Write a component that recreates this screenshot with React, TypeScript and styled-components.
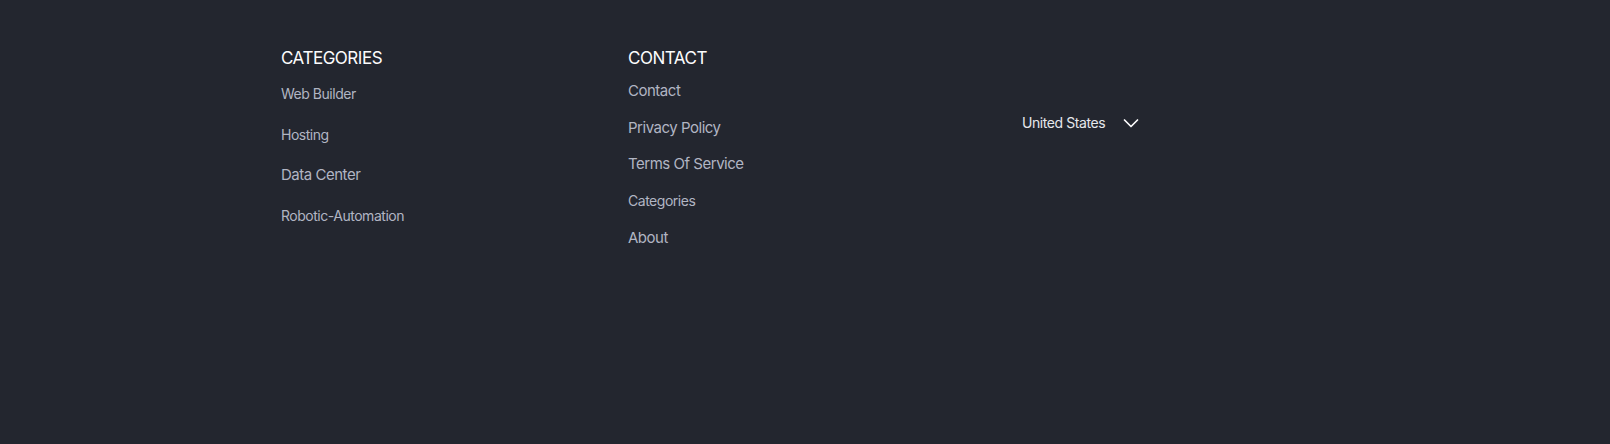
import React from "react";
import styled, { createGlobalStyle } from "styled-components";

const Global = createGlobalStyle`
  html, body { margin: 0; padding: 0; background: #23262f; }
  body { font-family: Inter, "Noto Sans", sans-serif; }
`;

const Footer = styled.footer`
  background: #23262f;
  height: 444px;
  box-sizing: border-box;
  padding: 46px 0 0 281px;
  display: grid;
  grid-template-columns: 347px 394px auto;
  align-items: start;
  letter-spacing: -0.03em;
`;

const Column = styled.div<{ $gap: number; $listTop: number }>`
  display: flex;
  flex-direction: column;
  & > ul {
    margin: ${(p) => p.$listTop}px 0 0;
    padding: 0;
    list-style: none;
    display: flex;
    flex-direction: column;
    gap: ${(p) => p.$gap}px;
  }
`;

const Heading = styled.h4`
  margin: 0;
  font-size: 17px;
  line-height: 24px;
  font-weight: 400;
  color: #fcfcfd;
  text-transform: uppercase;
`;

const Link = styled.a<{ $size: number }>`
  display: block;
  font-size: ${(p) => p.$size}px;
  line-height: 24px;
  color: #b1b5c3;
  text-decoration: none;
`;

const Region = styled.button`
  margin-top: 65px;
  display: flex;
  align-items: center;
  gap: 18px;
  background: none;
  border: 0;
  padding: 0;
  font-family: inherit;
  font-size: 14px;
  letter-spacing: -0.03em;
  line-height: 24px;
  color: #e6e8ec;
  cursor: pointer;
`;

const categories: [string, number][] = [
  ["Web Builder", 14],
  ["Hosting", 14],
  ["Data Center", 15],
  ["Robotic-Automation", 14],
];

const contact: [string, number][] = [
  ["Contact", 15],
  ["Privacy Policy", 15],
  ["Terms Of Service", 15],
  ["Categories", 14],
  ["About", 15],
];

export default function App() {
  return (
    <>
      <Global />
      <Footer>
        <Column $gap={16.7} $listTop={12}>
          <Heading>Categories</Heading>
          <ul>
            {categories.map(([t, s]) => (
              <li key={t}>
                <Link href="#" $size={s}>{t}</Link>
              </li>
            ))}
          </ul>
        </Column>
        <Column $gap={12.8} $listTop={8.8}>
          <Heading>Contact</Heading>
          <ul>
            {contact.map(([t, s]) => (
              <li key={t}>
                <Link href="#" $size={s}>{t}</Link>
              </li>
            ))}
          </ul>
        </Column>
        <div>
          <Region>
            United States
            <svg width="16" height="10" viewBox="0 0 16 10" fill="none">
              <path d="M1.5 2 L8 8.5 L14.5 2" stroke="#fcfcfd" strokeWidth="1.7" strokeLinecap="round" strokeLinejoin="round" />
            </svg>
          </Region>
        </div>
      </Footer>
    </>
  );
}
